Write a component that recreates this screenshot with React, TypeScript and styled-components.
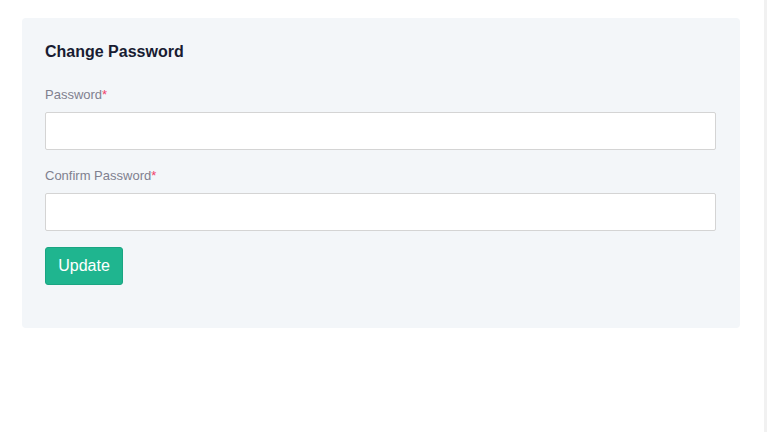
import React from "react";
import styled, { createGlobalStyle } from "styled-components";

const GlobalStyle = createGlobalStyle`
  body {
    margin: 0;
    background: #fff;
    font-family: "Liberation Sans", Arial, sans-serif;
  }
`;

const Page = styled.div`
  display: flex;
  width: 767px;
  height: 432px;
`;

const Main = styled.div`
  flex: 1;
  padding: 18px 24px 0 22px;
`;

const Scrollbar = styled.div`
  width: 3px;
  background: #f1f1f1;
`;

const Card = styled.div`
  background: #f3f6f9;
  border-radius: 4px;
  padding: 25px 24px 43px 23px;
`;

const Title = styled.h3`
  margin: 0 0 26px;
  font-size: 16px;
  line-height: 18px;
  font-weight: 700;
  color: #181c32;
`;

const Field = styled.div`
  display: flex;
  flex-direction: column;
  gap: 9px;
  margin-bottom: 18px;
`;

const Label = styled.label`
  font-size: 13px;
  line-height: 16px;
  color: #80808f;
`;

const Required = styled.span`
  color: #f1416c;
`;

const Input = styled.input`
  height: 38px;
  box-sizing: border-box;
  border: 1px solid #d4d4d4;
  border-radius: 2px;
  background: #fff;
  outline: none;
  padding: 0 12px;
  font-size: 14px;
`;

const Button = styled.button`
  width: 78px;
  height: 38px;
  margin-top: -2px;
  border: 1px solid #1aa582;
  border-radius: 3px;
  background: #1fb58f;
  color: #fff;
  font-family: "Liberation Sans", Arial, sans-serif;
  font-size: 16px;
  cursor: pointer;
  padding: 0;
`;

const App = () => {
  const [password, setPassword] = React.useState("");
  const [confirm, setConfirm] = React.useState("");

  return (
    <Page>
      <GlobalStyle />
      <Main>
        <Card>
          <Title>Change Password</Title>
          <Field>
            <Label>
              Password<Required>*</Required>
            </Label>
            <Input type="password" value={password} onChange={(e) => setPassword(e.target.value)} />
          </Field>
          <Field>
            <Label>
              Confirm Password<Required>*</Required>
            </Label>
            <Input type="password" value={confirm} onChange={(e) => setConfirm(e.target.value)} />
          </Field>
          <Button>Update</Button>
        </Card>
      </Main>
      <Scrollbar />
    </Page>
  );
};

export default App;
